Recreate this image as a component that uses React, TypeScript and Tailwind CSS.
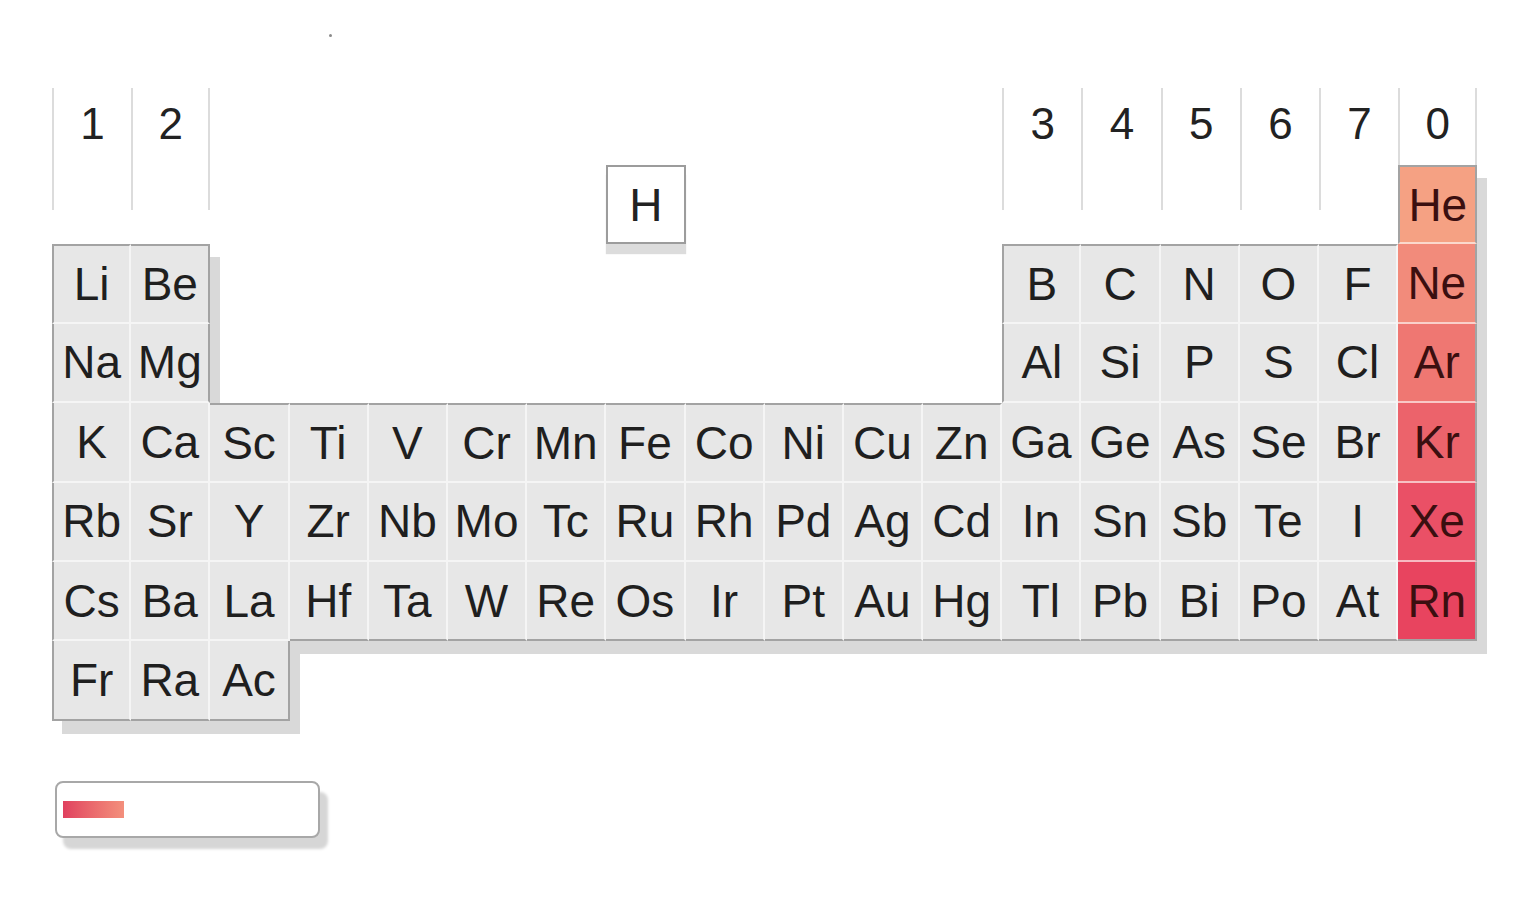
import React from 'react'

const groups = ['1', '2', '', '', '', '', '', '', '', '', '', '', '3', '4', '5', '6', '7', '0']

const layout: string[][] = [
  ['', '', '', '', '', '', '', 'H', '', '', '', '', '', '', '', '', '', 'He'],
  ['Li', 'Be', '', '', '', '', '', '', '', '', '', '', 'B', 'C', 'N', 'O', 'F', 'Ne'],
  ['Na', 'Mg', '', '', '', '', '', '', '', '', '', '', 'Al', 'Si', 'P', 'S', 'Cl', 'Ar'],
  ['K', 'Ca', 'Sc', 'Ti', 'V', 'Cr', 'Mn', 'Fe', 'Co', 'Ni', 'Cu', 'Zn', 'Ga', 'Ge', 'As', 'Se', 'Br', 'Kr'],
  ['Rb', 'Sr', 'Y', 'Zr', 'Nb', 'Mo', 'Tc', 'Ru', 'Rh', 'Pd', 'Ag', 'Cd', 'In', 'Sn', 'Sb', 'Te', 'I', 'Xe'],
  ['Cs', 'Ba', 'La', 'Hf', 'Ta', 'W', 'Re', 'Os', 'Ir', 'Pt', 'Au', 'Hg', 'Tl', 'Pb', 'Bi', 'Po', 'At', 'Rn'],
  ['Fr', 'Ra', 'Ac', '', '', '', '', '', '', '', '', '', '', '', '', '', '', ''],
]

// noble gas shades, top to bottom
const nobleBg = [
  'bg-[#f5a183]',
  'bg-[#f28b7b]',
  'bg-[#ef7772]',
  'bg-[#ec636b]',
  'bg-[#ea5066]',
  'bg-[#e8445f]',
]

const has = (r: number, c: number) => {
  const s = layout[r]?.[c]
  return !!s && s !== 'H'
}

function Cell({ r, c }: { r: number; c: number }) {
  const sym = layout[r][c]
  if (!sym) return <div />

  if (sym === 'H') {
    return (
      <div className="flex items-center justify-center bg-white border-2 border-[#9c9c9c] shadow-[0_10px_1px_#dcdcdc] text-[46px] leading-none text-[#222]">
        {sym}
      </div>
    )
  }

  const noble = c === 17
  const top = has(r - 1, c) ? '' : 'border-t-2 border-t-[#a3a3a3]'
  const left = has(r, c - 1) ? '' : 'border-l-2 border-l-[#a3a3a3]'
  const right = has(r, c + 1) ? 'border-r-2 border-r-white/60' : 'border-r-2 border-r-[#a3a3a3]'
  const bottom = has(r + 1, c) ? 'border-b-2 border-b-white/60' : 'border-b-2 border-b-[#a3a3a3]'

  return (
    <div
      className={`flex items-center justify-center text-[46px] leading-none shadow-[10px_13px_0_#d9d9d9] ${top} ${left} ${right} ${bottom} ${
        noble ? `${nobleBg[r]} text-[#3b0f10]` : 'bg-[#e7e7e7] text-[#1f1f1f]'
      }`}
    >
      {sym}
    </div>
  )
}

export default function App() {
  return (
    <main className="w-[1532px] h-[908px] bg-white overflow-hidden font-['Liberation_Sans',Arial,sans-serif]">
      <div className="h-[88px] pl-[329px] pt-[34px]">
        <div className="w-[3px] h-[3px] rounded-full bg-[#8a8a8a]" />
      </div>

      <div className="pl-[52px]">
        <div className="grid grid-cols-[repeat(18,79.2px)] grid-rows-[77px_repeat(7,79.4px)]">
          {groups.map((g, i) =>
            g ? (
              <div
                key={'g' + i}
                className={`self-start h-[122px] border-l-2 border-l-[#dcdcdc] pt-[14px] text-center text-[44px] leading-none text-[#222] ${
                  i === 1 || i === 17 ? 'border-r-2 border-r-[#dcdcdc]' : ''
                }`}
              >
                {g}
              </div>
            ) : (
              <div key={'g' + i} />
            )
          )}
          {layout.map((row, r) => row.map((_, c) => <Cell key={r + '-' + c} r={r} c={c} />))}
        </div>

        <div className="mt-[60px] ml-[3px] w-[265px] h-[57px] rounded-lg border-2 border-[#a8a8a8] bg-white shadow-[8px_11px_3px_#d6d6d6] flex items-center px-[6px]">
          <div className="w-[61px] h-[17px] bg-gradient-to-r from-[#e0405f] to-[#f38f7c]" />
        </div>
      </div>
    </main>
  )
}
